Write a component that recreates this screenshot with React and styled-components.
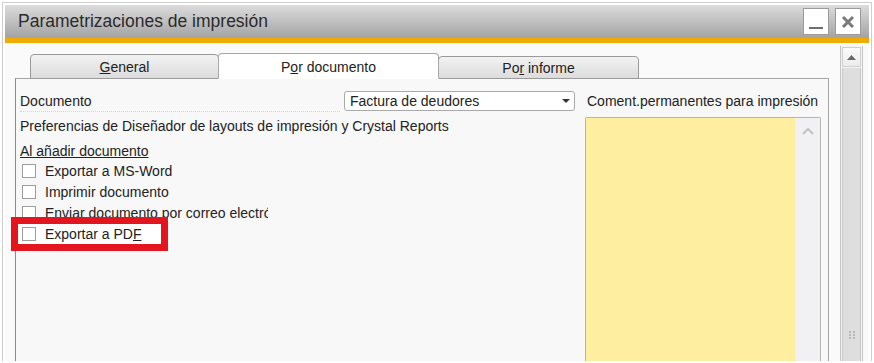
import React from "react";
import styled, { createGlobalStyle } from "styled-components";

const GlobalStyle = createGlobalStyle`
  html, body {
    margin: 0;
    padding: 0;
    background: #ffffff;
  }
  body {
    font-family: "Liberation Sans", Arial, sans-serif;
    font-size: 14px;
    color: #222222;
  }
`;

const Frame = styled.div`
  box-sizing: border-box;
  width: 874px;
  height: 363px;
  padding: 2px;
  background: #ffffff;
`;

const Window = styled.div`
  box-sizing: border-box;
  height: 100%;
  border: 1px solid #cdcdcd;
  border-bottom: none;
  padding: 2px 2px 0 2px;
  display: flex;
  flex-direction: column;
  overflow: hidden;
`;

const TitleBar = styled.div`
  flex: none;
  height: 33px;
  display: flex;
  align-items: center;
  padding: 0 8px 0 13px;
  background: linear-gradient(#dcdcdc, #a3a3a3);
  border-bottom: 5px solid #f0ab00;
`;

const Title = styled.div`
  flex: 1;
  font-size: 17.5px;
  color: #2b2b2b;
  padding-bottom: 1px;
`;

const TitleButton = styled.div`
  box-sizing: border-box;
  width: 26px;
  height: 27px;
  margin-left: 6px;
  background: #ffffff;
  border: 1px solid #9c9c9c;
  display: flex;
  align-items: center;
  justify-content: center;
`;

const Body = styled.div`
  flex: 1;
  display: flex;
  min-height: 0;
  background: #fafafa;
  padding-left: 10px;
`;

const Main = styled.div`
  width: 814px;
  display: flex;
  flex-direction: column;
  padding-top: 10px;
`;

const TabRow = styled.div`
  display: flex;
  align-items: flex-end;
  height: 26px;
  padding-left: 15px;
  margin-bottom: -1px;
  position: relative;
  z-index: 1;
`;

const Tab = styled.div`
  box-sizing: border-box;
  width: ${(p) => p.$width}px;
  height: ${(p) => (p.$active ? 26 : p.$height)}px;
  display: flex;
  align-items: center;
  justify-content: center;
  padding-top: 1px;
  border: 1px solid ${(p) => (p.$active ? "#a8a8a8" : "#9a9a9a")};
  border-bottom: ${(p) => (p.$active ? "1px solid #ffffff" : "1px solid #9a9a9a")};
  border-radius: 4px 4px 0 0;
  background: ${(p) =>
    p.$active ? "#ffffff" : "linear-gradient(#f2f2f2, #dcdcdc)"};
  color: #222222;
  margin-left: ${(p) => (p.$active ? "-1px" : "0")};
  margin-right: ${(p) => (p.$active ? "-1px" : "0")};
  position: relative;
  z-index: ${(p) => (p.$active ? 2 : 1)};
`;

const Key = styled.span`
  text-decoration: underline;
`;

const Panel = styled.div`
  flex: 1;
  box-sizing: border-box;
  border: 1px solid #a6a6a6;
  border-left-color: #8a8a8a;
  border-bottom: none;
  background: #f8f8f8;
  display: grid;
  grid-template-columns: 555px 236px;
  column-gap: 10px;
  padding: 11px 7px 0 4px;
`;

const LeftCol = styled.div`
  display: flex;
  flex-direction: column;
`;

const Row = styled.div`
  display: flex;
  align-items: center;
  height: ${(p) => p.$h}px;
  white-space: nowrap;
`;

const FieldLabel = styled.div`
  flex: 1;
  align-self: stretch;
  display: flex;
  align-items: center;
  border-bottom: 1px dotted #d6d6d6;
  margin-right: 4px;
`;

const Select = styled.div`
  box-sizing: border-box;
  width: 231px;
  height: 20px;
  display: flex;
  align-items: center;
  justify-content: space-between;
  padding: 0 4px 0 5px;
  background: #ffffff;
  border: 1px solid #a9a9a9;
  border-radius: 3px;
`;

const SectionTitle = styled.div`
  text-decoration: underline;
  padding-top: 2px;
`;

const CheckRow = styled.div`
  display: flex;
  align-items: center;
  height: 21px;
  margin-left: ${(p) => (p.$marked ? "-2px" : "0")};
  padding-left: ${(p) => (p.$marked ? "4px" : "2px")};
  ${(p) =>
    p.$marked &&
    `
    width: 139px;
    height: 20px;
    margin-top: 1px;
    background: #ffffff;
    outline: 7px solid #e3161f;
  `}
`;

const Box = styled.div`
  box-sizing: border-box;
  width: 14px;
  height: 14px;
  border: 1px solid #9d9d9d;
  background: #ffffff;
  flex: none;
`;

const CheckLabel = styled.div`
  margin-left: 9px;
  max-width: 223px;
  white-space: nowrap;
  overflow: hidden;
`;

const RightCol = styled.div`
  display: flex;
  flex-direction: column;
`;

const CommentLabel = styled.div`
  height: 22px;
  display: flex;
  align-items: center;
  padding-left: 2px;
  margin-bottom: 5px;
  white-space: nowrap;
`;

const TextArea = styled.div`
  flex: 1;
  display: flex;
  border: 1px solid #b4b4b4;
  border-bottom: none;
  border-radius: 2px 2px 0 0;
`;

const Yellow = styled.div`
  flex: 1;
  background: #fdeea0;
`;

const InnerScroll = styled.div`
  width: 25px;
  background: #f1f1f3;
  display: flex;
  justify-content: center;
  padding-top: 9px;
`;

const ScrollBar = styled.div`
  box-sizing: border-box;
  width: 23px;
  margin-left: 11px;
  margin-top: 3px;
  border-left: 1px solid #c4c4c4;
  border-right: 1px solid #c4c4c4;
  background: #f4f4f4;
  display: flex;
  flex-direction: column;
`;

const ScrollButton = styled.div`
  height: 18px;
  margin: 1px;
  border: 1px solid #d0d0d0;
  background: linear-gradient(#fbfbfb, #ececec);
  display: flex;
  align-items: center;
  justify-content: center;
`;

const Track = styled.div`
  flex: 1;
  margin: 0 1px;
  border-left: 1px solid #c9c9c9;
  border-right: 1px solid #c9c9c9;
  background: #dedede;
  display: flex;
  justify-content: center;
  padding-top: 263px;
`;

function Grip() {
  return (
    <svg width="8" height="9" viewBox="0 0 8 9">
      {[0, 3, 6].map((y) =>
        [1, 5].map((x) => (
          <rect key={`${x}-${y}`} x={x} y={y} width="2" height="2" fill="#b9b9b9" />
        ))
      )}
    </svg>
  );
}

const checks = [
  { label: "Exportar a MS-Word" },
  { label: "Imprimir documento" },
  { label: "Enviar documento por correo electrónico" },
];

export default function App() {
  return (
    <>
      <GlobalStyle />
      <Frame>
        <Window>
          <TitleBar>
            <Title>Parametrizaciones de impresión</Title>
            <TitleButton>
              <svg width="16" height="16" viewBox="0 0 16 16">
                <rect x="1" y="13" width="14" height="2" fill="#6f6f6f" />
              </svg>
            </TitleButton>
            <TitleButton>
              <svg width="14" height="14" viewBox="0 0 14 14">
                <path d="M2 2 L12 12 M12 2 L2 12" stroke="#7a7a7a" strokeWidth="3" />
              </svg>
            </TitleButton>
          </TitleBar>
          <Body>
            <Main>
              <TabRow>
                <Tab $width={189} $height={25}>
                  <span>
                    <Key>G</Key>eneral
                  </span>
                </Tab>
                <Tab $width={221} $active>
                  <span>
                    P<Key>o</Key>r documento
                  </span>
                </Tab>
                <Tab $width={201} $height={23}>
                  <span>
                    Po<Key>r</Key> informe
                  </span>
                </Tab>
              </TabRow>
              <Panel>
                <LeftCol>
                  <Row $h={22}>
                    <FieldLabel>Documento</FieldLabel>
                    <Select>
                      <span>Factura de deudores</span>
                      <svg width="8" height="5" viewBox="0 0 8 5">
                        <path d="M0 0 H8 L4 4 Z" fill="#333" />
                      </svg>
                    </Select>
                  </Row>
                  <Row $h={28}>
                    Preferencias de Diseñador de layouts de impresión y Crystal Reports
                  </Row>
                  <Row $h={20}>
                    <SectionTitle>Al añadir documento</SectionTitle>
                  </Row>
                  {checks.map((c) => (
                    <CheckRow key={c.label}>
                      <Box />
                      <CheckLabel>{c.label}</CheckLabel>
                    </CheckRow>
                  ))}
                  <CheckRow $marked>
                    <Box />
                    <CheckLabel>
                      Exportar a PD<Key>F</Key>
                    </CheckLabel>
                  </CheckRow>
                </LeftCol>
                <RightCol>
                  <CommentLabel>Coment.permanentes para impresión</CommentLabel>
                  <TextArea>
                    <Yellow />
                    <InnerScroll>
                      <svg width="12" height="8" viewBox="0 0 12 8">
                        <path d="M1 7 L6 2 L11 7" stroke="#c2c2c2" strokeWidth="2" fill="none" />
                      </svg>
                    </InnerScroll>
                  </TextArea>
                </RightCol>
              </Panel>
            </Main>
            <ScrollBar>
              <ScrollButton>
                <svg width="9" height="5" viewBox="0 0 9 5">
                  <path d="M0 5 L4.5 0 L9 5 Z" fill="#6a6a6a" />
                </svg>
              </ScrollButton>
              <Track>
                <Grip />
              </Track>
            </ScrollBar>
          </Body>
        </Window>
      </Frame>
    </>
  );
}
